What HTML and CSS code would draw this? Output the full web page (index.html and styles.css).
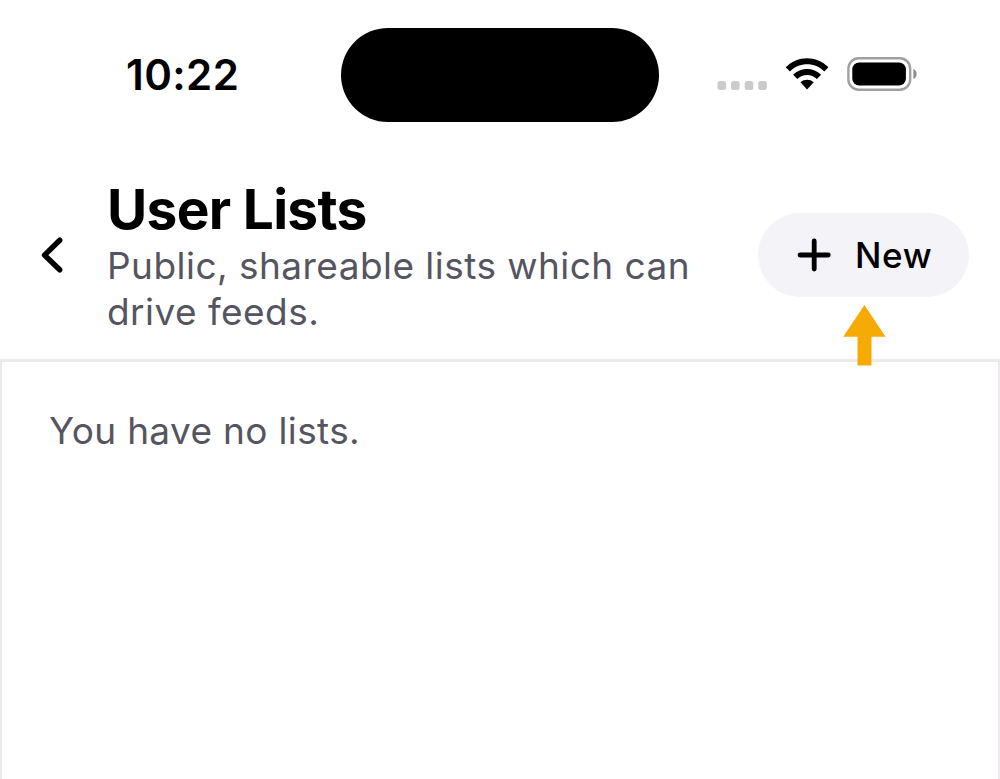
FILE: index.html
```html
<!DOCTYPE html>
<html lang="en">
<head>
<meta charset="utf-8">
<title>User Lists</title>
<link rel="stylesheet" href="styles.css">
</head>
<body>
<div class="status">
  <div class="time">10:22</div>
  <div class="island"></div>
  <svg class="indicators" width="210" height="50" viewBox="710 50 210 50">
    <g fill="#cbcbcb">
      <rect x="717.5" y="81" width="8.6" height="9" rx="2.5"/>
      <rect x="731" y="81" width="8.6" height="9" rx="2.5"/>
      <rect x="744.7" y="81" width="8.6" height="9" rx="2.5"/>
      <rect x="758.2" y="81" width="8.6" height="9" rx="2.5"/>
    </g>
    <path d="M785.8 67.3C797.5 55.2 816.5 55.2 828.4 67.3L824.3 71.5C814.8 61.8 799.4 61.8 789.9 71.5Z"/>
    <path d="M793.1 74.8C800.8 67 813.4 67 821.1 74.8L816.9 79C811.4 73.8 802.8 73.8 797.3 79Z"/>
    <path d="M800.5 82.3C804 79 810.2 79 813.7 82.3L807.1 89.5Z"/>
    <rect x="848.4" y="58.3" width="61.8" height="31.4" rx="10.2" fill="#fff" stroke="#a0a0a0" stroke-width="2.4"/>
    <rect x="852.3" y="62.4" width="53.6" height="23" rx="6.8"/>
    <path d="M913.4 69C915.3 69.5 916.6 71.5 916.6 74S915.3 78.5 913.4 79Z" fill="#8c8c8c"/>
  </svg>
</div>
<header class="header">
  <svg class="back" width="24" height="38" viewBox="40 236 24 38"><path d="M59.7 240.2L44.5 255.1L59.7 269.8" fill="none" stroke="#000" stroke-width="5.4" stroke-linecap="round" stroke-linejoin="round"/></svg>
  <div class="heading">
    <h1 class="title">User Lists</h1>
    <p class="subtitle">Public, shareable lists which can<br>drive feeds.</p>
  </div>
  <div class="new">
    <svg width="34" height="34" viewBox="0 0 34 34"><path d="M17.2 2.9V31.1M3 17H31.3" fill="none" stroke="#000" stroke-width="4.8" stroke-linecap="round"/></svg>
    <span class="label">New</span>
    <svg class="arrow" width="43" height="61" viewBox="0 0 43 61"><path d="M21.4 0L42.6 31.8H28.5V60.5H14.5V31.8H.2Z" fill="#f6aa04"/></svg>
  </div>
</header>
<main class="content">
  <p class="empty">You have no lists.</p>
</main>
</body>
</html>
```
FILE: styles.css
```css
* { box-sizing: border-box; }
body {
  margin: 0;
  height: 779px;
  display: flex;
  flex-direction: column;
  overflow: hidden;
  background: #fff;
  color: #000;
  font-family: Inter, "Liberation Sans", sans-serif;
}
h1, p { margin: 0; }
svg { display: block; flex: none; }
.status {
  height: 150px;
  flex: none;
  display: flex;
  align-items: flex-start;
}
.time {
  width: 341px;
  padding: 49.5px 0 0 126px;
  font-size: 42px;
  line-height: 50px;
  font-weight: 600;
  letter-spacing: 0.4px;
  white-space: nowrap;
}
.island {
  width: 318px;
  height: 94px;
  margin-top: 28px;
  border-radius: 47px;
  background: #000;
}
.indicators { margin: 50px 0 0 51px; }
.header {
  height: 209px;
  flex: none;
  display: flex;
  align-items: flex-start;
  padding: 26px 31px 0 40px;
}
.back { margin-top: 60px; }
.heading {
  flex: 1;
  padding-left: 43px;
  white-space: nowrap;
}
.title {
  font-size: 55px;
  line-height: 67px;
  font-weight: 700;
  letter-spacing: -0.7px;
}
.subtitle, .empty {
  font-size: 37px;
  line-height: 46px;
  color: #555562;
}
.subtitle { letter-spacing: 0.46px; }
.empty { letter-spacing: 0.35px; }
.new {
  position: relative;
  width: 211px;
  height: 84px;
  margin-top: 36.6px;
  padding-left: 39px;
  display: flex;
  align-items: center;
  gap: 24px;
  border-radius: 42px;
  background: #f3f3f8;
}
.label {
  font-size: 35px;
  line-height: 46px;
  font-weight: 500;
  letter-spacing: 0.6px;
}
.arrow {
  position: absolute;
  left: 85px;
  top: 92px;
}
.content {
  flex: 1;
  border: solid #eceaec;
  border-width: 3px 2px 0;
  padding: 46px 47px;
}
```
